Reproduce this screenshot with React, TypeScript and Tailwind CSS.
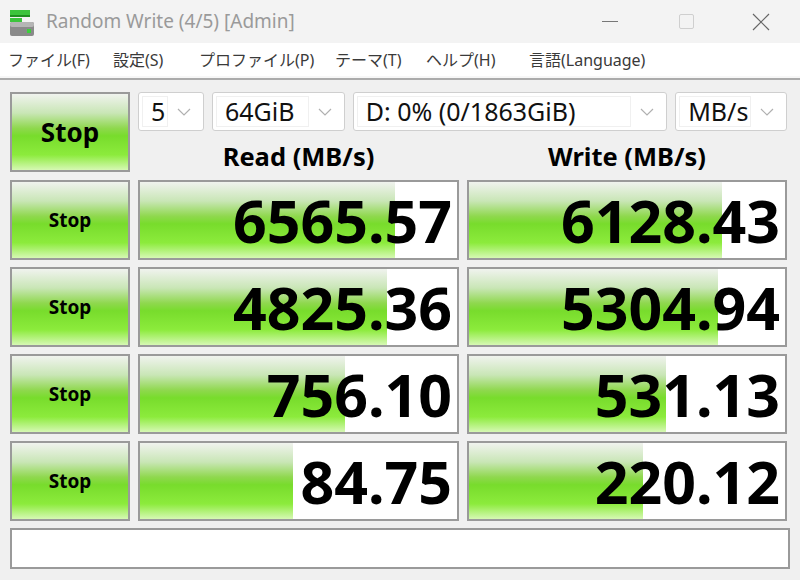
import React from "react";

const font = { fontFamily: '"Noto Sans", "Noto Sans CJK JP", sans-serif' };

const bar =
  "bg-[linear-gradient(to_bottom,#f0f3ee_0%,#c9e6b6_25%,#8fd84e_45%,#78dc2c_55%,#8ceb3c_80%,#d6f8b4_100%)]";

const rows = [
  { read: "6565.57", readBar: 255, write: "6128.43", writeBar: 253 },
  { read: "4825.36", readBar: 247, write: "5304.94", writeBar: 249 },
  { read: "756.10", readBar: 205, write: "531.13", writeBar: 197 },
  { read: "84.75", readBar: 153, write: "220.12", writeBar: 174 },
];

const menu = [
  { label: "ファイル(F)", w: "w-[105px]" },
  { label: "設定(S)", w: "w-[86px]" },
  { label: "プロファイル(P)", w: "w-[136px]" },
  { label: "テーマ(T)", w: "w-[91px]" },
  { label: "ヘルプ(H)", w: "w-[103px]" },
  { label: "言語(Language)", w: "w-[150px]" },
];

function AppIcon() {
  return (
    <svg width="26" height="28" viewBox="0 0 26 28">
      <rect x="1" y="1" width="20" height="5" fill="#3cc43c" />
      <rect x="1" y="6" width="20" height="2" fill="#1e8f1e" />
      <rect x="1" y="9" width="12" height="4" fill="#3cc43c" />
      <rect x="1" y="13" width="24" height="14" rx="2" fill="#8a8a8a" />
      <rect x="1" y="13" width="24" height="5" rx="2" fill="#b5b5b5" />
      <rect x="18" y="20" width="4" height="4" fill="#3cd03c" />
    </svg>
  );
}

function Chevron() {
  return (
    <svg width="14" height="8" viewBox="0 0 14 8">
      <path d="M1 1 L7 7 L13 1" fill="none" stroke="#b0b0b0" strokeWidth="1.2" />
    </svg>
  );
}

function Select({ label, w }: { label: string; w: string }) {
  return (
    <div className={`${w} h-[39px] flex items-center rounded-[3px] border border-[#cfcfcf] bg-white p-[3px]`}>
      <div className="flex-1 h-full border border-[#f0f0f0] flex items-center pl-[8px] text-[25px] text-[#111] leading-none">
        {label}
      </div>
      <div className="w-[32px] flex items-center justify-center">
        <Chevron />
      </div>
    </div>
  );
}

function StopButton({ big }: { big?: boolean }) {
  return (
    <div
      className={`h-[80px] border-2 border-[#9a9a9a] ${bar} flex items-center justify-center font-bold text-black ${
        big ? "text-[26px]" : "text-[19px]"
      }`}
    >
      Stop
    </div>
  );
}

function Cell({ value, width }: { value: string; width: number }) {
  return (
    <div className="relative h-[80px] border-2 border-[#9a9a9a] bg-white overflow-hidden">
      <div className={`absolute left-0 top-0 bottom-0 ${bar}`} style={{ width }} />
      <div className="relative h-full flex items-center justify-end pr-[5px] text-[59px] font-bold text-black leading-none">
        {value}
      </div>
    </div>
  );
}

export default function App() {
  return (
    <div className="w-[800px] h-[580px] bg-[#f0f0f0] overflow-hidden" style={font}>
      <div className="h-[43px] bg-[#f3f3f3] flex items-center">
        <div className="pl-[9px] pr-[11px] pt-[2px]">
          <AppIcon />
        </div>
        <div className="text-[19px] text-[#9a9a9a]">Random Write (4/5) [Admin]</div>
        <div className="ml-auto flex items-center h-full">
          <div className="w-[76px] flex justify-center">
            <div className="w-[16px] h-[1px] bg-[#777]" />
          </div>
          <div className="w-[76px] flex justify-center">
            <div className="w-[15px] h-[15px] border border-[#cfcfcf] rounded-[2px]" />
          </div>
          <div className="w-[76px] flex justify-center pr-[2px]">
            <svg width="18" height="18" viewBox="0 0 18 18">
              <path d="M1 1 L17 17 M17 1 L1 17" stroke="#666" strokeWidth="1.2" />
            </svg>
          </div>
        </div>
      </div>
      <div className="h-[33px] bg-white flex items-center pl-[8px] text-[16px] text-[#3a3a3a]">
        {menu.map((m) => (
          <span key={m.label} className={`${m.w} shrink-0 whitespace-nowrap`}>
            {m.label}
          </span>
        ))}
      </div>
      <div className="h-[2px] bg-[#f7f7f7]" />
      <div className="h-[2px] bg-[#ababab]" />
      <div className="px-[10px] pt-[12px]">
        <div className="grid grid-cols-[120px_321px_320px] gap-x-[8px] gap-y-[7px]">
          <StopButton big />
          <div className="col-span-2 flex flex-col">
            <div className="flex gap-[8px]">
              <Select label="5" w="w-[66px]" />
              <Select label="64GiB" w="w-[133px]" />
              <Select label="D: 0% (0/1863GiB)" w="w-[315px]" />
              <Select label="MB/s" w="w-[112px]" />
            </div>
            <div className="grid grid-cols-[321px_320px] gap-x-[8px] pt-[8px] text-[25.5px] font-bold text-black text-center leading-[34px]">
              <div>Read (MB/s)</div>
              <div>Write (MB/s)</div>
            </div>
          </div>
          {rows.map((r) => (
            <React.Fragment key={r.read}>
              <StopButton />
              <Cell value={r.read} width={r.readBar} />
              <Cell value={r.write} width={r.writeBar} />
            </React.Fragment>
          ))}
        </div>
        <div className="mt-[7px] h-[41px] border-2 border-[#9a9a9a] bg-white" />
      </div>
    </div>
  );
}
